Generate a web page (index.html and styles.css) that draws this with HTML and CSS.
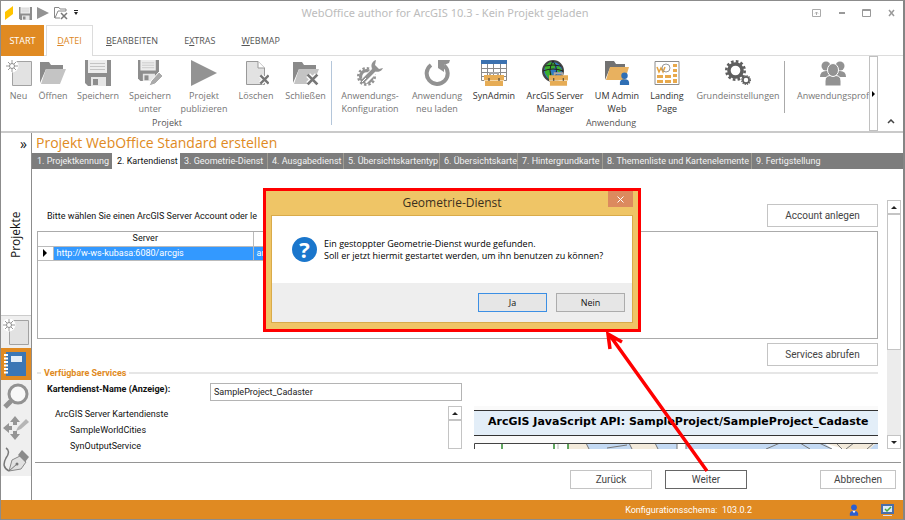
FILE: index.html
```html
<!DOCTYPE html>
<html lang="de">
<head>
<meta charset="utf-8">
<title>WebOffice author for ArcGIS 10.3</title>
<link rel="stylesheet" href="styles.css">
</head>
<body>
<svg class="defs" aria-hidden="true">
  <symbol id="new" viewBox="0 0 26 26"><path d="M6.500 1.500H25.500V25.500H6.500Z" fill="#e2e2e2" stroke="#a2a2a2"/><circle cx="6" cy="6" r="6.500" fill="#fff"/><path d="M6 0V12M0 6H12M2 2L10 10M10 2L2 10" stroke="#9a9a9a"/><circle cx="6" cy="6" r="2.500" fill="#fff" stroke="#8e8e8e"/></symbol>
  <symbol id="folder" viewBox="0 0 26 26"><path d="M0 23V2H9L11 5H23V9H6Z" fill="#8a8a8a"/><path d="M6 9H26L20 24H1Z" fill="#c4c4c4"/></symbol>
  <symbol id="floppy" viewBox="0 0 26 26"><path d="M0 0H26V26H3L0 23Z" fill="#8d8d8d"/><path d="M3 0H22V13H3Z" fill="#ededed"/><path d="M5 3.500H20M5 6.500H20M5 9.500H20" stroke="#c4c4c4"/><path d="M6 17H21V26H6Z" fill="#e6e6e6"/><path d="M8 19H13V25H8Z" fill="#8d8d8d"/></symbol>
  <symbol id="cross" viewBox="0 0 12 12"><path d="M2 2L10 10M10 2L2 10" stroke="#fff" stroke-width="5"/><path d="M1.500 1.500L10.500 10.500M10.500 1.500L1.500 10.500" stroke="#777" stroke-width="2.600"/></symbol>
  <symbol id="folderx" viewBox="0 0 26 26"><use href="#folder" width="26" height="26"/><use href="#cross" x="13" y="13" width="13" height="13"/></symbol>
  <symbol id="play" viewBox="0 0 26 26"><path d="M0 0L26 13L0 26Z" fill="#939393"/></symbol>
  <symbol id="box" viewBox="0 0 20 14"><path d="M6 3V1H14V3" fill="none" stroke="#a8a8a8" stroke-width="2"/><path d="M0 3H20V8H0ZM1 9H19V14H1Z" fill="#e6ac55"/><path d="M0 8.500H20" stroke="#f6d8a8"/><path d="M5 6V9M15 6V9" stroke="#333"/></symbol>
  <symbol id="person" viewBox="0 0 12 14"><circle cx="6" cy="4" r="3.500" fill="#2f6fb5"/><path d="M1 14V11Q2 7.500 6 8Q10 7.500 11 11V14Z" fill="#2f6fb5"/></symbol>
  <symbol id="gear" viewBox="0 0 24 24"><circle cx="12" cy="12" r="7.500" fill="none" stroke="currentColor" stroke-width="4"/><circle cx="12" cy="12" r="10.500" fill="none" stroke="currentColor" stroke-width="3" stroke-dasharray="3 2.500"/></symbol>
</svg>

<div class="app">
  <header class="titlebar">
    <div class="quick">
      <svg width="10" height="14" viewBox="0 0 10 14"><path d="M1 6L9 0V8L1 14Z" fill="#ffc400"/></svg>
      <svg width="13" height="13"><use href="#floppy"/></svg>
      <svg width="12" height="12"><use href="#play"/></svg>
      <svg width="14" height="14" viewBox="0 0 14 14"><path d="M.5 12V1.500H5L6 3H12V5H4L1 12H6" fill="none" stroke="#888"/><path d="M7 7L13 13M13 7L7 13" stroke="#777" stroke-width="1.500"/></svg>
      <svg width="6" height="6" viewBox="0 0 6 6"><path d="M1 .5H5" stroke="#222"/><path d="M1 2H5L3 5Z" fill="#222"/></svg>
    </div>
    <div class="apptitle">WebOffice author for ArcGIS 10.3 - Kein Projekt geladen</div>
    <div class="wincontrols">
      <svg width="9" height="8" viewBox="0 0 9 8"><path d="M.5.5H8.500V7.500H.5ZM4.500 6V3M3 4.500L4.500 3L6 4.500" fill="none" stroke="#aaa"/></svg>
      <svg width="9" height="8" viewBox="0 0 9 8"><path d="M2 4H8" stroke="#999" stroke-width="2"/></svg>
      <svg width="9" height="8" viewBox="0 0 9 8"><path d="M.5.5H8.500V7.500H.5ZM.5 1.500H8.500" fill="none" stroke="#999"/></svg>
      <svg width="9" height="8" viewBox="0 0 9 8"><path d="M2 1L7 7M7 1L2 7" stroke="#999" stroke-width="1.500"/></svg>
    </div>
  </header>

  <nav class="menu">
    <button class="start">START</button>
    <button class="current"><u>D</u>ATEI</button>
    <button><u>B</u>EARBEITEN</button>
    <button>E<u>X</u>TRAS</button>
    <button><u>W</u>EBMAP</button>
  </nav>

  <div class="ribbon">
    <section class="group project">
      <button><svg><use href="#new"/></svg>Neu</button>
      <button><svg><use href="#folder"/></svg>Öffnen</button>
      <button><svg><use href="#floppy"/></svg>Speichern</button>
      <button><svg viewBox="0 0 26 26"><use href="#floppy" x="1" width="21" height="21"/><path d="M12 26L14 21L22 12L26 16L18 24Z" fill="#aaa" stroke="#fff"/></svg>Speichern<br>unter</button>
      <button><svg><use href="#play"/></svg>Projekt<br>publizieren</button>
      <button><svg viewBox="0 0 26 26"><path d="M3.500 1.500H15L21.500 8V24.500H3.500Z" fill="#e2e2e2" stroke="#999"/><path d="M15 1.500V8H21.500" fill="#fff" stroke="#999"/><use href="#cross" x="16" y="14" width="11" height="11"/></svg>Löschen</button>
      <button><svg><use href="#folderx"/></svg>Schließen</button>
      <h2>Projekt</h2>
    </section>
    <section class="group application">
      <button><svg viewBox="0 0 26 26" color="#929292"><use href="#gear" x="0" y="7" width="19" height="19"/><path d="M7 21L19 9" stroke="#fff" stroke-width="7"/><path d="M6 21L18 9" stroke="#929292" stroke-width="4" stroke-linecap="round"/><path d="M19 0A6 6 0 1 0 26 8L22 9L18 5Z" fill="#929292"/><path d="M5 22L9 18" stroke="#fff"/></svg>Anwendungs-<br>Konfiguration</button>
      <button><svg viewBox="0 0 26 26"><path d="M7 5A10.500 10.500 0 1 0 20 5.500" fill="none" stroke="#929292" stroke-width="4"/><path d="M14 0H26L25 3L20 5V12L14 8Z" fill="#929292"/></svg>Anwendung<br>neu laden</button>
      <button class="dark"><svg viewBox="0 0 26 26"><path d="M.5 2.500H25.500V20.500H.5ZM.5 8.500H25.500M.5 12.500H25.500M.5 16.500H25.500M6.500 2V20M12.500 2V20M19.500 2V20" fill="#fff" stroke="#8a8a8a"/><path d="M0 0H26V4H0Z" fill="#3c72b0"/><use href="#box" x="3" y="12" width="20" height="14"/></svg>SynAdmin</button>
      <button class="dark"><svg viewBox="0 0 26 26"><circle cx="11" cy="11" r="10" fill="#2f78c4" stroke="#444" stroke-width="2"/><path d="M3 6L8 2L14 4L12 9L8 10L10 15L7 19L3 13ZM16 5L20 10L17 13L14 9Z" fill="#3cae2d"/><path d="M11 1Q5 10 11 21M11 1Q18 10 11 21M1 11Q11 7 21 11M3 6Q11 4 19 6" fill="none" stroke="#222"/><use href="#box" x="7" y="12" width="19" height="14"/></svg>ArcGIS Server<br>Manager</button>
      <button class="dark"><svg viewBox="0 0 26 26"><path d="M1 20V1H10L12 4H21V8H6Z" fill="#727272"/><path d="M6 7H25L21 20H2Z" fill="#e8b15f"/><use href="#person" x="15" y="12" width="11" height="13"/></svg>UM Admin<br>Web</button>
      <button class="dark"><svg viewBox="0 0 26 26"><path d="M1 1.500H25V24.500H1Z" fill="#fff" stroke="#8c8c8c"/><path d="M3 7L5 12L7 8L9 12L11 7" fill="none" stroke="#e6a23c" stroke-width="1.500"/><circle cx="12" cy="8" r="4" fill="none" stroke="#999"/><path d="M19 4H23V7H19ZM19 9H23V12H19ZM19 14H23V17H19ZM3 15H9V18H3ZM11 15H17V18H11ZM3 20H9V23H3ZM11 20H17V23H11ZM19 19H23V23H19Z" fill="#e8a94c"/></svg>Landing<br>Page</button>
      <button><svg viewBox="0 0 26 26" color="#5e5e5e"><use href="#gear" x="0" y="0" width="21" height="21"/><use href="#gear" x="16" y="15" width="10" height="10"/></svg>Grundeinstellungen</button>
      <button class="profiles"><svg viewBox="0 0 26 26" fill="#929292"><circle cx="6" cy="6" r="4.500"/><circle cx="20" cy="6" r="4.500"/><path d="M0 17Q0 11 6 11H20Q26 11 26 17Z"/><g stroke="#fff"><path d="M5 26V21Q5 16 10 15.500H16Q21 16 21 21V26Z"/><ellipse cx="13" cy="10" rx="5.500" ry="6.500"/></g></svg>Anwendungsprof</button>
      <h2>Anwendung</h2>
    </section>
    <button class="overflow" aria-label="Weiter blättern"><svg viewBox="0 0 3 6" width="3" height="6"><path d="M0 0L3 3L0 6Z"/></svg></button>
    <button class="collapse" aria-label="Menüband"><svg viewBox="0 0 8 5" width="8" height="5"><path d="M1 4L4 1L7 4" fill="none" stroke="#444" stroke-width="1.500"/></svg></button>
  </div>

  <div class="workspace">
    <aside class="sidebar">
      <button class="expand">»</button>
      <div class="sidelabel">Projekte</div>
      <div class="tools">
        <button aria-label="Neu"><svg><use href="#new"/></svg></button>
        <button class="active" aria-label="Projekte"><svg viewBox="0 0 26 26"><path d="M3 1H23V25H3Z" fill="#3b76b5"/><path d="M8 5H19V11H8Z" fill="#e4edf7"/><path d="M3 3V24" stroke="#fff" stroke-width="4" stroke-dasharray="2 1.500"/></svg></button>
        <button aria-label="Suche"><svg viewBox="0 0 26 26"><circle cx="15" cy="11" r="9" fill="#f8f8f8" stroke="#929292" stroke-width="3"/><path d="M8 18L2 24" stroke="#929292" stroke-width="5"/></svg></button>
        <button aria-label="Bearbeiten"><svg viewBox="0 0 26 26"><path d="M7 7L12 1L17 7H14V10H10V7ZM7 19L12 25L17 19H14V16H10V19ZM6 8L0 13L6 18V15H9V11H6Z" fill="#959595"/><path d="M13 16L15 12L23 4L26 7L18 14Z" fill="#b5b5b5"/></svg></button>
        <button aria-label="Zeichnen"><svg viewBox="0 0 26 26"><path d="M3 1Q8 4 3 11Q-2 20 6 24" fill="none" stroke="#777" stroke-width="1.500"/><path d="M6 24L9 13L17 9L23 15L18 22Z" fill="#e0e0e0" stroke="#888"/><path d="M15 8L19 3L26 10L22 15Z" fill="#8a8a8a"/><path d="M6 24L14 17" stroke="#777"/><circle cx="14" cy="17" r="1.500" fill="#777"/></svg></button>
      </div>
    </aside>

    <main>
      <h1>Projekt WebOffice Standard erstellen</h1>
      <ol class="steps">
        <li>1. Projektkennung</li><li class="current">2. Kartendienst</li><li>3. Geometrie-Dienst</li><li>4. Ausgabedienst</li><li>5. Übersichtskartentyp</li><li>6. Übersichtskarte</li><li>7. Hintergrundkarte</li><li>8. Themenliste und Kartenelemente</li><li>9. Fertigstellung</li>
      </ol>
      <div class="page">
        <div class="content">
          <div class="intro"><p>Bitte wählen Sie einen ArcGIS Server Account oder le</p><button class="btn wide">Account anlegen</button></div>
          <div class="gridbox">
            <table>
              <colgroup><col class="mark"><col class="server"><col></colgroup>
              <thead><tr><th colspan="2">Server</th><th></th></tr></thead>
              <tbody><tr><td><svg width="4" height="8" viewBox="0 0 4 8"><path d="M0 0L4 4L0 8Z"/></svg></td><td>http://w-ws-kubasa:6080/arcgis</td><td>ar</td></tr></tbody>
            </table>
          </div>
          <div class="fetch"><button class="btn wide">Services abrufen</button></div>
          <fieldset>
            <legend>Verfügbare Services</legend>
            <div class="namerow"><label for="svc">Kartendienst-Name (Anzeige):</label><input id="svc" value="SampleProject_Cadaster"></div>
            <div class="tree">
              <ul><li>ArcGIS Server Kartendienste<ul><li>SampleWorldCities</li><li>SynOutputService</li></ul></li></ul>
              <div class="scroll"><button class="up" aria-label="Nach oben"></button><div class="thumb"></div></div>
            </div>
            <div class="preview">
              <div class="maptitle">ArcGIS JavaScript API: SampleProject/SampleProject_Cadaste</div>
              <svg viewBox="0 0 404 6" preserveAspectRatio="none"><path d="M0 0H404V6H0Z" fill="#fff"/><path d="M94 0H112L115 6H94ZM155 0H181L184 6H155ZM350 0H404L400 6H370Z" fill="#f3eadb"/><path d="M112 0H155L158 6H115ZM181 0H203V6H184ZM212 0H326L345 6H212ZM326 0H350L358 6H336ZM400 2L404 0V6H396Z" fill="#c3d9f3"/><path d="M112 0L115 6M155 0L158 6M133 5L153 2M181 0L184 6M203 6V0M212 0V6M292 6L306 0M326 0L336 6M345 0L358 6M362 0L368 6M372 6L380 0M393 6L400 0" fill="none" stroke="#777"/><path d="M28 0V6M80 0V6M94 0V6" stroke="#2f8a2f" stroke-width="1.500"/><path d="M84 0V6" stroke="#bbb"/><path d="M.5 6V.5H404" fill="none" stroke="#444"/></svg>
            </div>
          </fieldset>
        </div>
        <div class="scroll pagescroll"><button class="up" aria-label="Nach oben"></button><div class="thumb"></div><button class="down" aria-label="Nach unten"></button></div>
      </div>
      <footer><button class="btn">Zurück</button><button class="btn primary">Weiter</button><button class="btn cancel">Abbrechen</button></footer>
    </main>
  </div>

  <div class="status">
    <span>Konfigurationsschema:&nbsp; 103.0.2</span>
    <svg viewBox="0 0 12 14" width="10" height="12"><circle cx="6" cy="4" r="3.500" fill="#2c5fd0"/><path d="M1 14V11Q2 7.500 6 8Q10 7.500 11 11V14Z" fill="#2c5fd0"/><path d="M4 8L6 11L8 8Z" fill="#fff"/></svg>
    <svg viewBox="0 0 13 12" width="13" height="12"><path d="M1 1H12V9H1Z" fill="#dcebf8" stroke="#4a6ea8" stroke-width="2"/><path d="M2 11.500H11" stroke="#dde"/><path d="M4 5L6 7L10 3" fill="none" stroke="#4aa83a" stroke-width="1.500"/></svg>
  </div>

  <div class="dialog" role="dialog" aria-labelledby="dlgtitle">
    <div class="dlghead"><h2 id="dlgtitle">Geometrie-Dienst</h2><button class="close" aria-label="Schließen"><svg viewBox="0 0 7 7" width="7" height="7"><path d="M.5.5L6.500 6.500M6.500.5L.5 6.500" stroke="#fff"/></svg></button></div>
    <div class="dlgbody">
      <div class="message"><span class="question">?</span><p>Ein gestoppter Geometrie-Dienst wurde gefunden.<br>Soll er jetzt hiermit gestartet werden, um ihn benutzen zu können?</p></div>
      <div class="actions"><button class="yes">Ja</button><button>Nein</button></div>
    </div>
  </div>
  <svg class="arrow" viewBox="0 0 102 142" width="102" height="142"><path d="M101 140L5 6M4 18L2 3L16 11" fill="none" stroke="#f00" stroke-width="3.500"/></svg>
</div>
</body>
</html>
```
FILE: styles.css
```css
* { box-sizing: border-box; }
body { margin: 0; font: 9px/12px "Open Sans", "Noto Sans", sans-serif; color: #111; background: #fff; }
button { font: inherit; color: inherit; background: none; border: 0; padding: 0; margin: 0; }
h1, h2, p, ul, ol { margin: 0; padding: 0; font-weight: normal; list-style: none; }
svg { flex: none; }
.defs { position: absolute; width: 0; height: 0; }

.app { position: relative; display: flex; flex-direction: column; min-height: 100vh; border: 1px solid #8c8c8c; border-right: 2px solid #858585; overflow: hidden; }

.titlebar { display: flex; align-items: center; height: 24px; padding: 0 7px 0 3px; }
.quick { display: flex; align-items: center; gap: 5px; width: 92px; }
.apptitle { flex: 1; text-align: center; padding-right: 18px; font-family: "Noto Sans", sans-serif; font-size: 11px; line-height: 16px; color: #bcbcbc; }
.wincontrols { display: flex; gap: 16px; }

.menu { display: flex; height: 31px; border-bottom: 1px solid #dcdcdc; color: #555; }
.menu button { height: 31px; padding: 0 13px; }
.menu .start { width: 43px; padding: 0; background: #e08a22; color: #fff; }
.menu .current { width: 47px; padding: 0; margin: 0 0 0 2px; border: 1px solid #dcdcdc; border-bottom: 0; background: #fff; color: #dd8826; }

.ribbon { display: flex; height: 77px; border-bottom: 2px solid #cacaca; color: #767676; }
.group { display: grid; grid-template-rows: 61px 12px; position: relative; }
.group button { display: flex; flex-direction: column; align-items: center; padding-top: 4px; line-height: 13px; white-space: nowrap; }
.group button svg { width: 26px; height: 26px; margin-bottom: 3px; }
.group h2 { grid-column: 1 / -1; text-align: center; font-size: 9px; line-height: 12px; color: #555; }
.project { grid-template-columns: 33px 36px 54px 50px 58px 46px 53px; margin-left: 1px; }
.project::after { content: ""; position: absolute; right: 0; top: 5px; bottom: 6px; width: 1px; background: #b4c6da; }
.application { flex: 1; min-width: 0; overflow: hidden; grid-template-columns: 68px 66px 48px 74px 50px 50px 92px 90px; padding-left: 4px; }
.application h2 { padding-left: 12px; }
.application .dark { color: #333; }
.application .profiles { border-left: 1px solid #aaa; height: 52px; margin-top: 5px; padding: 0 0 0 7px; }
.application .profiles svg { margin-top: -1px; }
.overflow { width: 9px; border: 1px solid #c0c0c0; }
.collapse { width: 25px; align-self: flex-end; padding: 0 0 4px; }

.workspace { display: flex; flex: 1; }
.sidebar { width: 31px; border-right: 1px solid #8c8c8c; display: flex; flex-direction: column; }
.expand { font-size: 14px; line-height: 20px; height: 22px; text-align: right; padding-right: 4px; }
.sidelabel { flex: 1; display: flex; align-items: center; writing-mode: vertical-rl; transform: rotate(180deg); justify-content: center; font-size: 12px; width: 30px; line-height: 30px; }
.tools { margin-bottom: 24px; background: #efefef; border-top: 1px solid #ccc; }
.tools button { display: flex; align-items: center; justify-content: center; width: 100%; height: 32px; }
.tools svg { width: 26px; height: 26px; }
.tools .active { background: #e08a22; }

main { flex: 1; min-width: 0; display: flex; flex-direction: column; font-family: Roboto, "Open Sans", sans-serif; }
h1 { font: 14px/20px "Open Sans", sans-serif; color: #e08a22; padding-left: 4px; }
.steps { display: grid; grid-template-columns: 80px 68px 88px 76px 96px 78px 85px 149px 1fr; background: #7d7d7d; color: #f3f3f3; line-height: 16px; white-space: nowrap; }
.steps li { padding-left: 4px; border-right: 1px solid #a19d92; }
.steps li:first-child, .steps li:last-child, .steps .current { border: 0; }
.steps li:first-child, .steps .current { padding-left: 5px; }
.steps .current { background: #fff; color: #111; }

.page { display: flex; flex: 1; padding: 31px 0 13px 2px; margin: 0 2px 0 3px; border-bottom: 1px solid #959595; }
.content { flex: 1; min-width: 0; padding-top: 4px; }
.btn { width: 82px; height: 19px; border: 1px solid #c4c4c4; background: #fff; color: #444; font-size: 10px; }
.btn.wide { width: 111px; height: 23px; }
.intro { display: flex; justify-content: space-between; align-items: center; padding-left: 10px; }
.gridbox { margin-top: 4px; height: 108px; border: 1px solid #ababab; }
table { width: 50%; border-collapse: collapse; table-layout: fixed; }
.mark { width: 15px; }
.server { width: 200px; }
th, td { padding: 0 3px; height: 14px; line-height: 13px; font-weight: normal; border: solid #bbb; border-width: 0 1px 1px 0; text-align: left; }
th { text-align: center; }
td { background: #3399ff; color: #fff; }
td:first-child { background: #fff; padding: 0 0 0 5px; }
td svg { display: block; }
.fetch { display: flex; justify-content: flex-end; margin: 4px 0 1px; }

fieldset { margin: 0; padding: 4px 0 0; border: 0; border-top: 2px solid #e6e6e6; min-width: 0; display: grid; grid-template-columns: 425fr 404fr; column-gap: 12px; row-gap: 5px; }
legend { margin-left: 4px; padding: 0 3px; line-height: 12px; font-weight: 700; color: #e08a22; }
.namerow { grid-column: 1; display: flex; justify-content: space-between; padding-left: 10px; }
.namerow label { font-weight: 700; }
.namerow input { width: 252px; height: 18px; border: 1px solid #b4b4b4; padding: 0 3px; font: inherit; color: #222; }
.tree { grid-column: 1; display: flex; height: 43px; }
.tree > ul { flex: 1; padding-left: 18px; line-height: 16px; height: 43px; }
.tree ul ul { padding-left: 15px; }
.preview { grid-column: 2; padding-top: 4px; height: 43px; overflow: hidden; background: #fafafa; }
.maptitle { border: solid #333; border-width: 1px 0; height: 26px; line-height: 21px; margin-bottom: 7px; padding-left: 14px; background: #e3eef8; font-family: "DejaVu Sans", sans-serif; font-weight: bold; font-size: 11px; white-space: nowrap; overflow: hidden; color: #000; }
.preview svg { display: block; width: 100%; height: 6px; }

.scroll { width: 14px; display: flex; flex-direction: column; background: #ececec; }
.scroll button { height: 14px; border: 1px solid #c4c4c4; background: #fff; display: flex; align-items: center; justify-content: center; }
.scroll button::before { content: ""; border: solid transparent; border-width: 0 3px 3px; border-bottom-color: #222; }
.scroll .down::before { border-width: 3px 3px 0; border-top-color: #222; }
.thumb { flex: 1; border: 1px solid #c4c4c4; background: #fff; }
.pagescroll { margin-left: 9px; }
.pagescroll .thumb { flex: none; height: 136px; margin-bottom: auto; }

footer { display: flex; justify-content: flex-end; padding: 7px 7px 11px; gap: 13px; }
.primary { border: 1px solid #666; }
.cancel { width: 76px; margin-left: 60px; }

.status { display: flex; align-items: center; justify-content: flex-end; height: 19px; padding-right: 9px; background: #e08a22; color: #fff; font-family: Roboto, "Open Sans", sans-serif; }
.status span { margin-right: 97px; }
.status svg + svg { margin-left: 22px; }

.dialog { position: absolute; top: 187px; left: 50%; width: 378px; margin-left: -189px; border: 3px solid #f00; background: #efc566; padding: 0 5px 6px; }
.dlghead { display: flex; height: 24px; align-items: center; position: relative; }
.dlghead h2 { flex: 1; text-align: center; font-size: 12px; line-height: 20px; color: #3a3020; }
.close { position: absolute; right: 0; top: 0; width: 25px; height: 16px; background: #dc8a5e; display: flex; align-items: center; justify-content: center; }
.dlgbody { border: 1px solid #d9ab4a; background: #fff; }
.message { display: flex; height: 67px; align-items: center; padding-left: 20px; gap: 7px; color: #000; white-space: nowrap; }
.question { width: 25px; height: 25px; border-radius: 50%; background: #1a76cc; color: #fff; font-size: 22px; font-weight: 700; line-height: 25px; text-align: center; }
.actions { display: flex; justify-content: flex-end; gap: 9px; padding: 10px 7px; background: #eee; }
.actions button { width: 69px; height: 19px; border: 1px solid #acacac; background: #e6e6e6; }
.actions .yes { border: 1px solid #3c8fe4; }
.arrow { position: absolute; left: 50%; margin-left: 154px; top: 330px; }
```
